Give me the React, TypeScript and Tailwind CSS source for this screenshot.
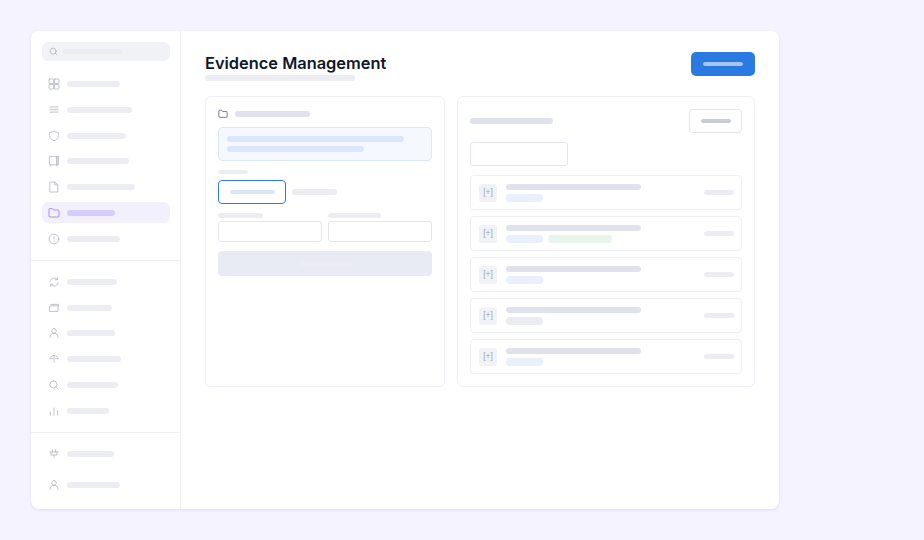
import { Folder, Search } from "lucide-react";
import type { ReactNode } from "react";

const icons: Record<string, ReactNode> = {
  grid: (
    <>
      <rect x="1" y="1" width="4.6" height="4.6" rx="0.6" />
      <rect x="6.4" y="1" width="4.6" height="4.6" rx="0.6" />
      <rect x="1" y="6.4" width="4.6" height="4.6" rx="0.6" />
      <rect x="6.4" y="6.4" width="4.6" height="4.6" rx="0.6" />
    </>
  ),
  list: <path d="M2 2.8h8M2 5.5h8M2 8.2h8" strokeWidth="1.3" opacity="0.7" />,
  shield: <path d="M6 1.2c1.2.8 2.6 1.2 4.4 1.2v3.4c0 2.4-1.8 4-4.4 5-2.6-1-4.4-2.6-4.4-5V2.4C3.4 2.4 4.8 2 6 1.2z" />,
  book: <path d="M1.8 1.4h8.2v8.4H1.8zM10 1.4v8.4M8.6 1.4v8.4M2.6 9.8v1.2M8.6 9.8v1.2" />,
  file: <path d="M2.2 1h4.6L9.8 4v7H2.2zM6.8 1v3h3" />,
  alert: (
    <>
      <circle cx="6" cy="6" r="4.9" />
      <path d="M6 3.6v2.6M6 7.8v.4" />
    </>
  ),
  refresh: <path d="M2 5.2C2.4 3.2 4 2 6 2c1.4 0 2.6.6 3.4 1.6M9.4 1.4v2.4H7.2M10 6.8C9.6 8.8 8 10 6 10c-1.4 0-2.6-.6-3.4-1.6M2.6 10.6V8.2h2.2" />,
  window: <path d="M2 3.8h8v5.6H2zM3 2.4h7.4v1.4" />,
  user: <path d="M6 1.6a2.3 2.3 0 1 1 0 4.6 2.3 2.3 0 0 1 0-4.6zM2 10.4c.2-2.4 1.8-4.2 4-4.2s3.8 1.8 4 4.2" />,
  scale: <path d="M6 2.6v6.6M2 5.6C2.4 3.6 4 2.6 6 2.6s3.6 1 4 3M2 5.6h2.4M7.6 5.6H10" />,
  search: <path d="M5.4 1.8a3.6 3.6 0 1 1 0 7.2 3.6 3.6 0 0 1 0-7.2zM8 7.9l2.4 2.4" />,
  bars: <path d="M2.4 7v3M6 3v7M9.6 5.4V10" />,
  plug: <path d="M4.4 1.6v2.4M7.6 1.6v2.4M2 4h8M3 4v3h6V4M6 7v3" />,
};

const navTop = [
  { icon: "grid", width: "w-[53px]" },
  { icon: "list", width: "w-[65px]" },
  { icon: "shield", width: "w-[59px]" },
  { icon: "book", width: "w-[62px]" },
  { icon: "file", width: "w-[68px]" },
  { icon: "folder", width: "w-[48px]", active: true },
  { icon: "alert", width: "w-[53px]" },
];

const navMiddle = [
  { icon: "refresh", width: "w-[50px]" },
  { icon: "window", width: "w-[45px]" },
  { icon: "user", width: "w-[48px]" },
  { icon: "scale", width: "w-[54px]" },
  { icon: "search", width: "w-[51px]" },
  { icon: "bars", width: "w-[42px]" },
];

const rows = [
  { tag: "bg-[#e9effd]" },
  { tag: "bg-[#e9effd]", extra: true },
  { tag: "bg-[#e9effd]" },
  { tag: "bg-[#ebecf1]" },
  { tag: "bg-[#e9effd]" },
];

function NavItem({ icon, width, active }: { icon: string; width: string; active?: boolean }) {
  return (
    <div className={`flex h-[21px] items-center gap-[7px] rounded-md px-[6px] ${active ? "bg-[#f3f0fe]" : ""}`}>
      {active ? (
        <Folder size={12} strokeWidth={1.3} className="text-[#7c5cf0]" />
      ) : (
        <svg width="12" height="12" viewBox="0 0 12 12" fill="none" stroke="#b9bcc6" strokeWidth="0.9" strokeLinecap="round" strokeLinejoin="round">
          {icons[icon]}
        </svg>
      )}
      <div className={`h-[6px] rounded-full ${width} ${active ? "bg-[#d6cdfb]" : "bg-[#ecedf2]"}`} />
    </div>
  );
}

export default function App() {
  return (
    <div className="h-[540px] w-[924px] bg-[#f5f3ff] p-[31px] font-['Inter',sans-serif]">
      <div className="flex h-[478px] w-[748px] overflow-hidden rounded-lg bg-white shadow-[0_1px_3px_rgba(90,80,160,0.14)]">
        {/* Sidebar */}
        <aside className="flex w-[150px] shrink-0 flex-col border-r border-[#eeeef3]">
          <div className="pt-[11px] pr-[10px] pl-[11px]">
            <div className="flex h-[19px] items-center gap-[5px] rounded-md bg-[#f1f2f6] px-[7px]">
              <Search size={9} strokeWidth={1.8} className="text-[#a9acb6]" />
              <div className="h-[5px] w-[60px] rounded-full bg-[#ecedf2]" />
            </div>
          </div>
          <div className="flex flex-col gap-[4.8px] pt-[12.5px] pr-[10px] pb-[11px] pl-[11px]">
            {navTop.map((item, i) => (
              <NavItem key={i} {...item} />
            ))}
          </div>
          <div className="flex flex-col gap-[4.8px] border-t border-[#eeeef3] pt-[10px] pr-[10px] pb-[11px] pl-[11px]">
            {navMiddle.map((item, i) => (
              <NavItem key={i} {...item} />
            ))}
          </div>
          <div className="flex flex-col gap-[10px] border-t border-[#eeeef3] pt-[10px] pr-[10px] pl-[11px]">
            <NavItem icon="plug" width="w-[47px]" />
            <NavItem icon="user" width="w-[53px]" />
          </div>
        </aside>

        {/* Main */}
        <main className="flex-1 px-6 pt-[21px]">
          <div className="flex items-start justify-between">
            <div>
              <h1 className="text-[16.4px] leading-[22px] font-semibold text-[#0f172a]">Evidence Management</h1>
              <div className="mt-[1px] h-[6px] w-[150px] rounded-full bg-[#ecedf2]" />
            </div>
            <div className="flex h-6 w-16 items-center justify-center rounded-[5px] bg-[#2b7ae4]">
              <div className="h-1 w-10 rounded-full bg-[#a5c6f3]" />
            </div>
          </div>

          <div className="mt-[15px] flex gap-3">
            {/* Left panel */}
            <section className="h-[291px] w-[240px] rounded-md border border-[#eeeff4] px-3 pt-[11px]">
              <div className="flex h-[11px] items-center gap-[6px]">
                <Folder size={10} strokeWidth={1.6} className="text-[#3a4052]" />
                <div className="ml-[1px] h-[6px] w-[75px] rounded-full bg-[#dfe2eb]" />
              </div>
              <div className="mt-[8px] flex h-[34px] flex-col justify-center gap-1 rounded-[4px] border border-[#dbe7fd] bg-[#f5f8ff] px-2">
                <div className="h-[6px] w-[177px] rounded-full bg-[#dbe6fc]" />
                <div className="h-[6px] w-[137px] rounded-full bg-[#dbe6fc]" />
              </div>
              <div className="mt-[9px] h-1 w-[30px] rounded-full bg-[#ecedf2]" />
              <div className="mt-[6px] flex items-center gap-[6px]">
                <div className="flex h-6 w-[68px] items-center justify-center rounded-[4px] border border-[#2b7ae4]">
                  <div className="h-1 w-[45px] rounded-full bg-[#d9e5fb]" />
                </div>
                <div className="h-[6px] w-[45px] rounded-full bg-[#ecedf2]" />
              </div>
              <div className="mt-[9px] grid grid-cols-2 gap-[6px]">
                <div>
                  <div className="h-[5px] w-[45px] rounded-full bg-[#ecedf2]" />
                  <div className="mt-[3px] h-[21px] rounded-[3px] border border-[#e2e4ee]" />
                </div>
                <div>
                  <div className="h-[5px] w-[53px] rounded-full bg-[#ecedf2]" />
                  <div className="mt-[3px] h-[21px] rounded-[3px] border border-[#e2e4ee]" />
                </div>
              </div>
              <div className="mt-[9px] flex h-[25px] items-center justify-center rounded-[4px] bg-[#e8ebf2]">
                <div className="h-[5px] w-[53px] rounded-full bg-[#ebedf3]" />
              </div>
            </section>

            {/* Right panel */}
            <section className="h-[291px] w-[298px] rounded-md border border-[#eeeff4] px-3 pt-3">
              <div className="flex items-center justify-between">
                <div className="h-[6px] w-[83px] rounded-full bg-[#dfe2eb]" />
                <div className="flex h-6 w-[53px] items-center justify-center rounded-[4px] border border-[#e2e4ee]">
                  <div className="h-1 w-[30px] rounded-full bg-[#c8ccd5]" />
                </div>
              </div>
              <div className="mt-[9px] h-6 w-[98px] rounded-[3px] border border-[#e2e4ee]" />
              <div className="mt-[9px] flex flex-col gap-[6px]">
                {rows.map((row, i) => (
                  <div key={i} className="flex h-[35px] items-center rounded-[4px] border border-[#eeeff4] pr-[7px] pl-2">
                    <div className="flex h-[18px] w-[18px] items-center justify-center rounded-[3px] bg-[#f1f2f6] font-['Liberation_Sans',sans-serif] text-[8.5px] leading-none text-[#a0a4af]">
                      [+]
                    </div>
                    <div className="ml-[9px] flex-1">
                      <div className="h-[6px] w-[135px] rounded-full bg-[#dfe2eb]" />
                      <div className="mt-1 flex gap-[5px]">
                        <div className={`h-2 w-[37px] rounded-full ${row.tag}`} />
                        {row.extra && <div className="h-2 w-16 rounded-full bg-[#e7f5ea]" />}
                      </div>
                    </div>
                    <div className="h-[5px] w-[30px] rounded-full bg-[#ecedf2]" />
                  </div>
                ))}
              </div>
            </section>
          </div>
        </main>
      </div>
    </div>
  );
}
